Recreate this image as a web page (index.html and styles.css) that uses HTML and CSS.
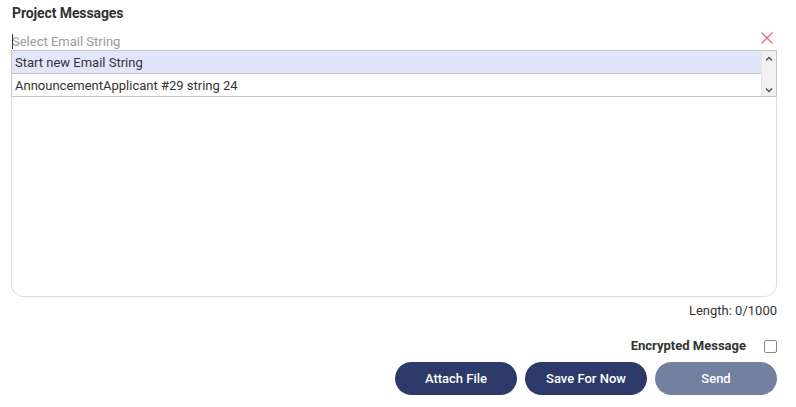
FILE: index.html
```html
<!DOCTYPE html>
<html>
<head>
<meta charset="utf-8">
<link rel="stylesheet" href="styles.css">
</head>
<body>
<div class="panel">
  <div class="title">Project Messages</div>
  <div class="picker">
    <div class="picker-input">
      <span class="caret"></span><span class="placeholder">Select Email String</span>
      <svg class="clear" width="14" height="14" viewBox="0 0 14 14"><path d="M1.5 1.5L12.5 12.5M12.5 1.5L1.5 12.5" stroke="#f06a6a" stroke-width="1.3" fill="none"/></svg>
    </div>
    <div class="editor">
      <div class="dropdown">
        <div class="options">
          <div class="option active">Start new Email String</div>
          <div class="option">AnnouncementApplicant #29 string 24</div>
        </div>
        <div class="scrollbar">
          <svg width="8" height="6" viewBox="0 0 8 6"><path d="M1 4.5L4 1.5L7 4.5" stroke="#555" stroke-width="1.5" fill="none"/></svg>
          <svg width="8" height="6" viewBox="0 0 8 6"><path d="M1 1.5L4 4.5L7 1.5" stroke="#555" stroke-width="1.5" fill="none"/></svg>
        </div>
      </div>
    </div>
  </div>
  <div class="length">Length: 0/1000</div>
  <div class="encrypt">
    <span>Encrypted Message</span>
    <span class="checkbox"></span>
  </div>
  <div class="actions">
    <button class="btn">Attach File</button>
    <button class="btn">Save For Now</button>
    <button class="btn disabled">Send</button>
  </div>
</div>
</body>
</html>
```

FILE: styles.css
```css
html, body {
  margin: 0;
  padding: 0;
  background: #fff;
}
body {
  font-family: Roboto, "Liberation Sans", sans-serif;
  color: #333;
}
.panel {
  width: 766px;
  padding: 4px 0 0 11px;
  display: flex;
  flex-direction: column;
}
.title {
  font-size: 14px;
  font-weight: 700;
  color: #333;
  line-height: 18px;
  padding-left: 1px;
  letter-spacing: -0.1px;
}
.picker {
  margin-top: 10px;
  display: flex;
  flex-direction: column;
}
.picker-input {
  display: flex;
  align-items: center;
  height: 18px;
  position: relative;
}
.caret {
  width: 1px;
  height: 15px;
  background: #333;
  margin-left: 1px;
}
.placeholder {
  font-size: 13px;
  color: #9a9a9a;
  margin-left: -1px;
}
.clear {
  margin-left: auto;
  margin-right: 3px;
  margin-top: -6px;
}
.editor {
  margin-top: 0;
  height: 245px;
  border: 1px solid #dcdcdc;
  border-radius: 0 0 12px 12px;
  position: relative;
}
.dropdown {
  position: absolute;
  left: -1px;
  right: -1px;
  top: -1px;
  display: flex;
  border: 1px solid #c6c6c6;
  background: #fff;
}
.options {
  flex: 1;
}
.option {
  height: 22px;
  line-height: 23px;
  font-size: 13px;
  color: #333;
  padding-left: 3px;
}
.option.active {
  background: #e1e6fb;
  border-bottom: 1px solid #c6c6c6;
}
.scrollbar {
  width: 14px;
  background: #f1f1f1;
  border-left: 1px solid #e6e6e6;
  display: flex;
  flex-direction: column;
  justify-content: space-between;
  align-items: center;
  padding: 5px 0 3px;
}
.length {
  align-self: flex-end;
  font-size: 13px;
  color: #333;
  margin-top: 6px;
  line-height: 16px;
}
.encrypt {
  align-self: flex-end;
  display: flex;
  align-items: center;
  margin-top: 19px;
  font-size: 13px;
  font-weight: 700;
  color: #333;
  line-height: 16px;
}
.checkbox {
  width: 11px;
  height: 11px;
  border: 1px solid #888;
  border-radius: 2px;
  margin-left: 18px;
}
.actions {
  align-self: flex-end;
  display: flex;
  gap: 8px;
  margin-top: 8px;
}
.btn {
  width: 122px;
  height: 33px;
  border: none;
  border-radius: 17px;
  background: #2c3a6a;
  color: #fff;
  font-family: Roboto, "Liberation Sans", sans-serif;
  font-size: 13px;
  font-weight: 500;
  padding: 0;
}
.btn.disabled {
  background: #74809f;
}
```
